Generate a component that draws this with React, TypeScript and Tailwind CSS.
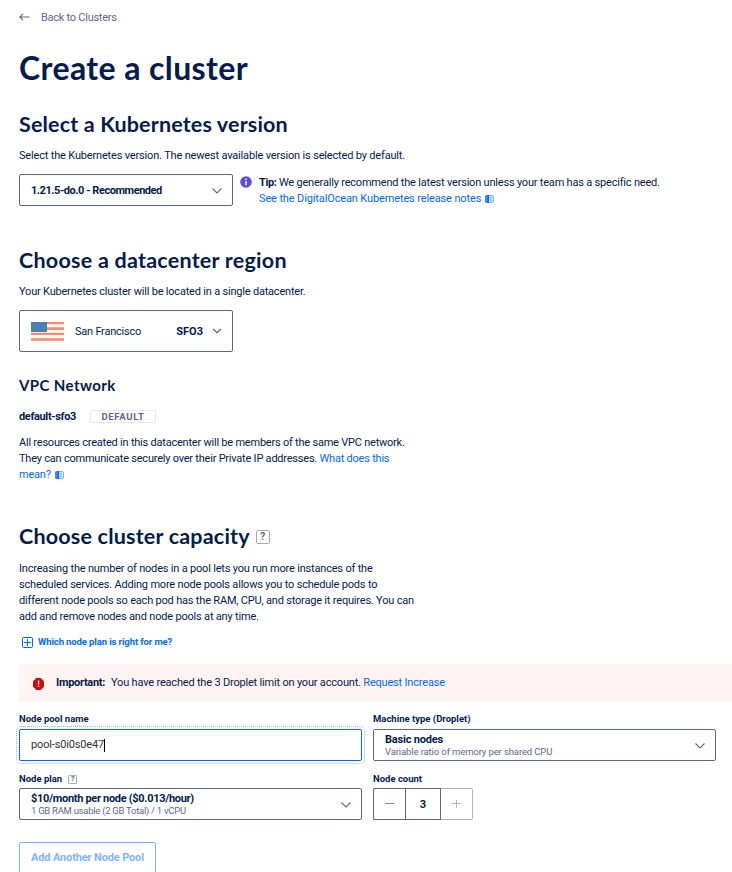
import type { ReactNode } from "react";

const body = "font-[Roboto,sans-serif] text-[11px] leading-4";
const heading = "font-[Lato,sans-serif] font-bold";

function Heading({ children, className = "" }: { children: ReactNode; className?: string }) {
  return <h2 className={`${heading} text-[21.5px] leading-[30px] ${className}`}>{children}</h2>;
}

function Chevron({ small = false }: { small?: boolean }) {
  return small ? (
    <svg className="-mr-px" width="10" height="6" viewBox="0 0 10 6" fill="none" stroke="#4a5578" strokeWidth="1.1"><path d="M1 .8 5 4.700 9 .8" /></svg>
  ) : (
    <svg className="mt-px -mr-px" width="10" height="6" viewBox="0 0 10 6" fill="none" stroke="#5b6987" strokeWidth="1.1"><path d="M.5.500 5 5 9.500.500" /></svg>
  );
}

function DocIcon() {
  return (
    <svg className="ml-1 inline-block align-[-1px]" width="9" height="8" viewBox="0 0 9 8" fill="none">
      <rect x=".5" y=".5" width="8" height="7" rx="1.5" fill="#d9e7ff" stroke="#7fb0ff" />
      <path d="M1.500 0H4v8H1.500Q0 8 0 6.500V1.500Q0 0 1.500 0Z" fill="#3d8bff" />
      <path d="M2.500 0H4v8H2.500z" fill="#0069ff" />
      <path d="M5.200 2.500h1.500M5.200 4h1.500M5.200 5.500h1.500" stroke="#4d94ff" strokeWidth=".8" />
    </svg>
  );
}

function HelpIcon({ small = false }: { small?: boolean }) {
  return small ? (
    <span className="flex h-[9px] w-[9px] items-center justify-center rounded-[1px] border border-[#a9b1c6] font-[Roboto,sans-serif] text-[7px] leading-none font-bold text-[#5b6987]">?</span>
  ) : (
    <span className="mt-px flex h-[14px] w-[14px] items-center justify-center rounded-[2px] border border-[#a3a9c2] font-[Roboto,sans-serif] text-[10px] leading-none font-bold text-[#5b6987]">?</span>
  );
}

function Label({ children }: { children: ReactNode }) {
  return <div className="flex h-[14px] items-center font-[Roboto,sans-serif] text-[9.5px] leading-[14px] font-bold">{children}</div>;
}

function PlanSelect({ title, detail, detailClass, titleClass }: { title: string; detail: string; detailClass: string; titleClass: string }) {
  return (
    <button className="flex h-8 w-[343px] items-center justify-between rounded-[2px] border border-[#5b6987] pr-[11px] pl-[11px] text-left">
      <span className="flex flex-col">
        <span className={`font-[Roboto,sans-serif] text-[11px] leading-[13px] font-bold ${titleClass}`}>{title}</span>
        <span className={`font-[Roboto,sans-serif] text-[9.5px] leading-[12px] text-[#5b6987] ${detailClass}`}>{detail}</span>
      </span>
      <Chevron />
    </button>
  );
}

export default function App() {
  return (
    <main className="flex h-[872px] w-[732px] flex-col overflow-hidden bg-white pt-[9px] pl-[19px] text-[#031b4e] *:shrink-0">
      <a className={`${body} flex h-4 items-center pt-px tracking-[-0.26px] text-[#5b6987]`}>
        <svg className="-mt-px mr-[11px]" width="11" height="8" viewBox="0 0 11 8" fill="none" stroke="#5b6987" strokeWidth="1.1"><path d="M10.500 4H1M4 .8.800 4 4 7.200" /></svg>
        Back to Clusters
      </a>
      <h1 className={`${heading} mt-[23px] text-[32px] leading-[40px] tracking-[0.4px]`}>Create a cluster</h1>

      <Heading className="mt-[21px] tracking-[0.15px]">Select a Kubernetes version</Heading>
      <p className={`${body} mt-[9px] tracking-[-0.17px]`}>Select the Kubernetes version. The newest available version is selected by default.</p>
      <div className="mt-[10px] flex h-8">
        <button className="flex h-8 w-[214px] items-center justify-between rounded-[2px] border border-[#5b6987] px-[11px]">
          <span className={`${body} pt-px font-bold tracking-[-0.45px]`}>1.21.5-do.0 - Recommended</span>
          <Chevron />
        </button>
        <svg className="mt-[2px] ml-[7px]" width="12" height="12" viewBox="0 0 12 12">
          <circle cx="6" cy="6" r="5.8" fill="#5c4ee5" />
          <path d="M5.300 2.500h1.400v1.400H5.300zM5.300 5h1.400v4.300H5.300z" fill="#fff" />
        </svg>
        <div className={`${body} ml-[7px] pt-px tracking-[-0.2px]`}>
          <p><b className="tracking-[-0.4px]">Tip:</b> We generally recommend the latest version unless your team has a specific need.</p>
          <p className="tracking-[-0.13px] text-[#0069ff]">See the DigitalOcean Kubernetes release notes<DocIcon /></p>
        </div>
      </div>

      <Heading className="mt-[39px] tracking-[0.24px]">Choose a datacenter region</Heading>
      <p className={`${body} mt-[9px] tracking-[-0.2px]`}>Your Kubernetes cluster will be located in a single datacenter.</p>
      <button className={`${body} mt-[10px] flex h-[42px] w-[214px] items-center rounded-[2px] border border-[#5b6987] px-[11px]`}>
        <svg width="33" height="19" viewBox="0 0 33 19">
          <path d="M0 0h33v2.200H0zM0 5.300h33v2.600H0zM0 10.800h33V13H0zM0 16.200h33v2.600H0z" fill="#ff8a69" />
          <path d="M0 0h16v10H0z" fill="#4682b4" />
        </svg>
        <span className="ml-[11px] flex-1 pt-px text-left tracking-[-0.23px]">San Francisco</span>
        <b className="mr-[9px] pt-px">SFO3</b>
        <Chevron small />
      </button>

      <h3 className={`${heading} mt-[23px] text-[15px] leading-5 tracking-[0.4px]`}>VPC Network</h3>
      <div className="mt-[15px] flex h-[13px] items-center">
        <span className={`${body} w-[71px] pt-px font-bold tracking-[-0.35px]`}>default-sfo3</span>
        <span className="flex h-[13px] w-[66px] items-center justify-center rounded-[2px] border border-[#e5e8ed] pt-px font-[Roboto,sans-serif] text-[9.5px] leading-none font-bold tracking-[0.65px] text-[#5b6987]">DEFAULT</span>
      </div>
      <p className={`${body} mt-3 tracking-[-0.22px]`}>
        All resources created in this datacenter will be members of the same VPC network.<br />
        They can communicate securely over their Private IP addresses. <a className="text-[#0069ff]">What does this<br />mean?<DocIcon /></a>
      </p>

      <div className="mt-[38px] flex h-[30px] items-center gap-[6px]">
        <Heading className="tracking-[0.2px]">Choose cluster capacity</Heading>
        <HelpIcon />
      </div>
      <p className={`${body} mt-[10px] tracking-[-0.19px]`}>
        Increasing the number of nodes in a pool lets you run more instances of the<br />
        scheduled services. Adding more node pools allows you to schedule pods to<br />
        different node pools so each pod has the RAM, CPU, and storage it requires. You can<br />
        add and remove nodes and node pools at any time.
      </p>
      <a className="mt-[9px] flex h-4 items-center pl-[3px] font-[Roboto,sans-serif] text-[9.5px] font-bold tracking-[-0.11px] text-[#0069ff]">
        <svg className="mr-[5px]" width="11" height="11" viewBox="0 0 11 11" fill="none" stroke="#0069ff"><rect x=".5" y=".5" width="10" height="10" rx="1" /><path d="M2 5.500h7M5.500 2v7" /></svg>
        Which node plan is right for me?
      </a>

      <div className={`${body} mt-[14px] flex h-[38px] items-center bg-[#fff4f3] pl-[14px] tracking-[-0.19px]`}>
        <svg className="mt-px mr-[12px]" width="11" height="12" viewBox="0 0 11 12">
          <path d="M3.300 0h4.400L11 3.300v5.400L7.700 12H3.300L0 8.700V3.300z" fill="#cc0d0d" />
          <path d="M4.900 2.600h1.300v4H4.900zM4.900 7.800h1.300v1.300H4.900z" fill="#fff" />
        </svg>
        <p><b className="mr-[6px] tracking-[-0.3px]">Important:</b>You have reached the 3 Droplet limit on your account. <a className="text-[#0069ff]">Request Increase</a></p>
      </div>

      <div className="mt-[10px] flex gap-[11px]">
        <div className="w-[343px]">
          <Label>Node pool name</Label>
          <div className={`${body} mt-[3px] flex h-8 items-center rounded-[2px] border border-[#0069ff] px-[11px] tracking-[-0.16px] text-[#333] outline-1 outline-offset-2 outline-[#a5b4c8] outline-dotted`}>
            pool-s0i0s0e47<span className="h-[13px] w-px bg-black" />
          </div>
        </div>
        <div className="w-[343px]">
          <Label>Machine type (Droplet)</Label>
          <div className="mt-[3px]">
            <PlanSelect title="Basic nodes" detail="Variable ratio of memory per shared CPU" titleClass="tracking-[-0.19px]" detailClass="tracking-[-0.12px]" />
          </div>
        </div>
      </div>

      <div className="mt-[11px] flex gap-[11px]">
        <div className="w-[343px]">
          <Label><span className="mr-[6px]">Node plan</span><HelpIcon small /></Label>
          <div className="mt-[2px]">
            <PlanSelect title="$10/month per node ($0.013/hour)" detail="1 GB RAM usable (2 GB Total) / 1 vCPU" titleClass="tracking-[-0.31px]" detailClass="tracking-[-0.27px]" />
          </div>
        </div>
        <div>
          <Label>Node count</Label>
          <div className="mt-[2px] flex h-8">
            <button className="flex w-8 items-center justify-center rounded-l-[2px] border border-r-0 border-[#5b6987]">
              <svg width="9" height="9" viewBox="0 0 9 9" stroke="#7c87a1"><path d="M0 3.500h9" /></svg>
            </button>
            <span className={`${body} flex w-9 items-center justify-center border border-[#5b6987] pt-px font-bold`}>3</span>
            <button className="flex w-8 items-center justify-center rounded-r-[2px] border border-l-0 border-[#adb4c3]">
              <svg width="9" height="9" viewBox="0 0 9 9" stroke="#adb4c3"><path d="M0 3.500h9M4.500 -1v9" /></svg>
            </button>
          </div>
        </div>
      </div>

      <button className={`${body} mt-[22px] h-8 w-[137px] rounded-[2px] border border-[#80b4ff] font-bold tracking-[-0.14px] text-[#80b4ff]`}>Add Another Node Pool</button>
    </main>
  );
}
